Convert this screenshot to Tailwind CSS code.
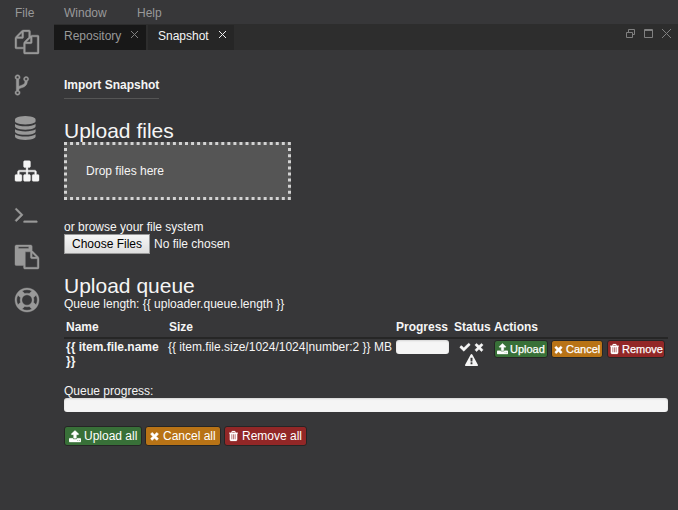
<!DOCTYPE html>
<html lang="en">
<head>
<meta charset="utf-8">
<title>Snapshot</title>
<script src="https://cdn.jsdelivr.net/npm/@tailwindcss/browser@4"></script>
</head>
<body class="w-[678px] h-[510px] overflow-hidden bg-[#373739] text-[#f5f5f5] font-['Liberation_Sans',Arial,sans-serif] text-[12px] leading-[17px]">
<svg class="hidden">
  <symbol id="check" viewBox="0 0 1792 1792"><path d="M1671 566q0 40-28 68l-724 724-136 136q-28 28-68 28t-68-28l-136-136-362-362q-28-28-28-68t28-68l136-136q28-28 68-28t68 28l294 295 656-657q28-28 68-28t68 28l136 136q28 28 28 68z"/></symbol>
  <symbol id="times" viewBox="192 0 1408 1792"><path d="M1490 1322q0 40-28 68l-136 136q-28 28-68 28t-68-28l-294-294-294 294q-28 28-68 28t-68-28l-136-136q-28-28-28-68t28-68l294-294-294-294q-28-28-28-68t28-68l136-136q28-28 68-28t68 28l294 294 294-294q28-28 68-28t68 28l136 136q28 28 28 68t-28 68l-294 294 294 294q28 28 28 68z"/></symbol>
  <symbol id="warning" viewBox="0 0 1792 1792"><path d="M1024 1375v-190q0-14-9.5-23.5t-22.5-9.5h-192q-13 0-22.5 9.5t-9.5 23.5v190q0 14 9.5 23.5t22.5 9.5h192q13 0 22.5-9.5t9.5-23.5zm-2-374l18-459q0-12-10-19-13-11-24-11h-220q-11 0-24 11-10 7-10 21l17 457q0 10 10 16.5t24 6.5h185q14 0 23.5-6.5t10.5-16.5zm-14-934l768 1408q35 63-2 126-17 29-46.5 46t-63.5 17h-1536q-34 0-63.5-17t-46.5-46q-37-63-2-126l768-1408q17-31 47-49t65-18 65 18 47 49z"/></symbol>
  <symbol id="trash" viewBox="192 0 1408 1792"><path d="M704 1376v-704q0-14-9-23t-23-9h-64q-14 0-23 9t-9 23v704q0 14 9 23t23 9h64q14 0 23-9t9-23zm256 0v-704q0-14-9-23t-23-9h-64q-14 0-23 9t-9 23v704q0 14 9 23t23 9h64q14 0 23-9t9-23zm256 0v-704q0-14-9-23t-23-9h-64q-14 0-23 9t-9 23v704q0 14 9 23t23 9h64q14 0 23-9t9-23zm-544-992h448l-48-117q-7-9-17-11h-317q-10 2-17 11zm928 32v64q0 14-9 23t-23 9h-96v948q0 83-47 143.5t-113 60.5h-832q-66 0-113-58.5t-47-141.5v-952h-96q-14 0-23-9t-9-23v-64q0-14 9-23t23-9h309l70-167q15-37 54-63t79-26h320q40 0 79 26t54 63l70 167h309q14 0 23 9t9 23z"/></symbol>
  <symbol id="upload" viewBox="64 0 1664 1792"><path d="M1344 1472q0-26-19-45t-45-19-45 19-19 45 19 45 45 19 45-19 19-45zm256 0q0-26-19-45t-45-19-45 19-19 45 19 45 45 19 45-19 19-45zm128-224v320q0 40-28 68t-68 28h-1472q-40 0-68-28t-28-68v-320q0-40 28-68t68-28h427q21 56 70.5 92t110.5 36h256q61 0 110.5-36t70.5-92h427q40 0 68 28t28 68zm-325-648q-17 40-59 40h-256v448q0 26-19 45t-45 19h-256q-26 0-45-19t-19-45v-448h-256q-42 0-59-40-17-39 14-69l448-448q18-19 45-19t45 19l448 448q31 30 14 69z"/></symbol>
</svg>

<header class="flex h-6 pl-[15px] pt-[5px] text-[#999]">
  <span class="w-[49px]">File</span><span class="w-[73px]">Window</span><span>Help</span>
</header>

<div class="flex">
  <nav class="flex flex-col gap-[19px] w-[54px] shrink-0 pl-[15px] pt-[6.4px] fill-[#999] stroke-[#999] [stroke-width:30]">
    <svg class="w-6 h-6 overflow-visible" viewBox="0 0 1792 1792"><path d="M1696 384q40 0 68 28t28 68v1216q0 40-28 68t-68 28h-960q-40 0-68-28t-28-68v-288h-544q-40 0-68-28t-28-68v-672q0-40 20-88t48-76l408-408q28-28 76-48t88-20h416q40 0 68 28t28 68v328q68-40 128-40h416zm-544 213l-299 299h299v-299zm-640-384l-299 299h299v-299zm196 647l316-316v-416h-384v416q0 40-28 68t-68 28h-416v640h512v-256q0-40 20-88t48-76zm956 804v-1152h-384v416q0 40-28 68t-68 28h-416v640h896z"/></svg>
    <svg class="w-[13.7px] h-6 overflow-visible" viewBox="384 0 1024 1792"><path d="M672 1472q0-40-28-68t-68-28-68 28-28 68 28 68 68 28 68-28 28-68zm0-1152q0-40-28-68t-68-28-68 28-28 68 28 68 68 28 68-28 28-68zm640 128q0-40-28-68t-68-28-68 28-28 68 28 68 68 28 68-28 28-68zm96 0q0 52-26 96.5t-70 69.5q-2 287-226 414-67 38-203 81-128 40-169.5 71t-41.5 100v26q44 25 70 69.5t26 96.5q0 80-56 136t-136 56-136-56-56-136q0-52 26-96.5t70-69.5v-820q-44-25-70-69.5t-26-96.5q0-80 56-136t136-56 136 56 56 136q0 52-26 96.5t-70 69.5v497q54-26 154-57 55-17 87.5-29.5t70.5-31 59-39.5 40.5-51 28-69.5 8.5-91.5q-44-25-70-69.5t-26-96.5q0-80 56-136t136-56 136 56 56 136z"/></svg>
    <svg class="w-[20.6px] h-6 stroke-none" viewBox="128 0 1536 1792"><path d="M896 768q237 0 443-43t325-127v170q0 69-103 128t-280 93.5-385 34.5-385-34.5-280-93.5-103-128v-170q119 84 325 127t443 43zm0 768q237 0 443-43t325-127v170q0 69-103 128t-280 93.5-385 34.5-385-34.5-280-93.5-103-128v-170q119 84 325 127t443 43zm0-384q237 0 443-43t325-127v170q0 69-103 128t-280 93.5-385 34.5-385-34.5-280-93.5-103-128v-170q119 84 325 127t443 43zm0-1152q208 0 385 34.5t280 93.5 103 128v128q0 69-103 128t-280 93.5-385 34.5-385-34.5-280-93.5-103-128v-128q0-69 103-128t280-93.5 385-34.5z"/></svg>
    <svg class="w-6 h-6 overflow-visible fill-[#f5f5f5] stroke-[#f5f5f5]" viewBox="0 0 1792 1792"><path d="M1792 1248v320q0 40-28 68t-68 28h-320q-40 0-68-28t-28-68v-320q0-40 28-68t68-28h96v-192h-512v192h96q40 0 68 28t28 68v320q0 40-28 68t-68 28h-320q-40 0-68-28t-28-68v-320q0-40 28-68t68-28h96v-192h-512v192h96q40 0 68 28t28 68v320q0 40-28 68t-68 28h-320q-40 0-68-28t-28-68v-320q0-40 28-68t68-28h96v-192q0-52 38-90t90-38h512v-192h-96q-40 0-68-28t-28-68v-320q0-40 28-68t68-28h320q40 0 68 28t28 68v320q0 40-28 68t-68 28h-96v192h512q52 0 90 38t38 90v192h96q40 0 68 28t28 68z"/></svg>
    <svg class="w-6 h-6 overflow-visible" viewBox="64 0 1792 1792"><path d="M649 983l-466 466q-10 10-23 10t-23-10l-50-50q-10-10-10-23t10-23l393-393-393-393q-10-10-10-23t10-23l50-50q10-10 23-10t23 10l466 466q10 10 10 23t-10 23zm1079 457v64q0 14-9 23t-23 9h-960q-14 0-23-9t-9-23v-64q0-14 9-23t23-9h960q14 0 23 9t9 23z"/></svg>
    <svg class="w-6 h-6 overflow-visible" viewBox="0 0 1792 1792"><path d="M768 1664h896v-640h-416q-40 0-68-28t-28-68v-416h-384v1152zm256-1440v-64q0-13-9.5-22.5t-22.5-9.5h-704q-13 0-22.5 9.5t-9.5 22.5v64q0 13 9.5 22.5t22.5 9.5h704q13 0 22.5-9.5t9.5-22.5zm256 672h299l-299-299v299zm512 128v672q0 40-28 68t-68 28h-960q-40 0-68-28t-28-68v-160h-544q-40 0-68-28t-28-68v-1344q0-40 28-68t68-28h1088q40 0 68 28t28 68v328q21 13 36 28l408 408q28 28 48 76t20 88z"/></svg>
    <svg class="w-6 h-6 overflow-visible" viewBox="0 0 1792 1792"><path d="M896 0q182 0 348 71t286 191 191 286 71 348-71 348-191 286-286 191-348 71-348-71-286-191-191-286-71-348 71-348 191-286 286-191 348-71zm0 128q-190 0-361 90l194 194q82-28 167-28t167 28l194-194q-171-90-361-90zm-678 1129l194-194q-28-82-28-167t28-167l-194-194q-90 171-90 361t90 361zm678 407q190 0 361-90l-194-194q-82 28-167 28t-167-28l-194 194q171 90 361 90zm0-384q159 0 271.5-112.5t112.5-271.5-112.5-271.5-271.5-112.5-271.5 112.5-112.5 271.5 112.5 271.5 271.5 112.5zm484-217l194 194q90-171 90-361t-90-361l-194 194q28 82 28 167t-28 167z"/></svg>
  </nav>

  <main class="w-[624px]">
    <div class="flex h-[26px] pt-px bg-[#2d2d2d]">
      <div class="flex w-[92px] h-[25px] bg-[#181818] pl-[10px] pt-[3px] text-[#999]">
        <span class="w-[67px]">Repository</span>
        <svg class="w-[7px] h-[7px] mt-[3px]" viewBox="0 0 7 7" stroke="#808080"><path d="M0 0L7 7M7 0L0 7"/></svg>
      </div>
      <div class="flex w-[86px] h-[25px] ml-[2px] bg-[#262626] pl-[10px] pt-[3px]">
        <span class="w-[61px]">Snapshot</span>
        <svg class="w-[7px] h-[7px] mt-[3px]" viewBox="0 0 7 7" stroke="#eee"><path d="M0 0L7 7M7 0L0 7"/></svg>
      </div>
      <div class="flex gap-[9px] ml-auto mr-[7px] pt-[4px]">
        <svg class="w-[9px] h-[9px]" viewBox="0 0 9 9" fill="none" stroke="#808080"><path d="M2.500 3V.5h6v5H6M.5 3.500h6v5h-6z"/></svg>
        <svg class="w-[9px] h-[9px]" viewBox="0 0 9 9" fill="none" stroke="#808080"><path d="M.5 .5h8v8h-8zM0 1.500h9"/></svg>
        <svg class="w-[9px] h-[9px]" viewBox="0 0 9 9" fill="none" stroke="#808080"><path d="M0 0L9 9M9 0L0 9"/></svg>
      </div>
    </div>

    <section class="pl-[10px] pr-[10px]">
      <div class="pt-[27px]"><div class="w-[95px] h-[22px] border-b border-[#555] font-bold whitespace-nowrap">Import Snapshot</div></div>

      <h2 class="mt-[20px] h-[23px] text-[21px] leading-[23px]">Upload files</h2>
      <div class="relative w-[227px] h-[58px] rounded-[3px] bg-[#555] pl-[22px] pt-[21px]">
        <svg class="absolute inset-0 w-[227px] h-[58px]" viewBox="0 0 227 58" fill="none" stroke="#d3d3d3" stroke-width="3"><path stroke-dasharray="3 3.05" d="M0 1.500H227M0 56.500H227"/><path stroke-dasharray="3 3.1" d="M1.500 6.100V55M225.500 6.100V55"/></svg>
        Drop files here
      </div>
      <div class="mt-[19px] h-[15px]">or browse your file system</div>
      <div class="flex h-[20px]">
        <button class="w-[86px] h-[20px] border border-[#999] bg-linear-to-b from-[#f6f6f6] to-[#dedede] text-black leading-[18px]">Choose Files</button>
        <span class="ml-[4px] pt-[2px]">No file chosen</span>
      </div>

      <h2 class="mt-[20px] h-[22px] text-[21px] leading-[23px]">Upload queue</h2>
      <div class="h-[21px]">Queue length: {{ uploader.queue.length }}</div>

      <div class="grid grid-cols-[103px_227px_58px_40px_176px] h-[22px] border-b-2 border-[#262626] pl-[2px] pt-[2px] w-[604px] font-bold whitespace-nowrap overflow-hidden">
        <span>Name</span><span>Size</span><span>Progress</span><span>Status</span><span>Actions</span>
      </div>
      <div class="flex w-[604px] h-[44px]">
        <div class="w-[104px] pl-[2px] pt-[1px] leading-[14px] font-bold">{{ item.file.name<br>}}</div>
        <div class="w-[228px] leading-[17px] whitespace-nowrap">{{ item.file.size/1024/1024|number:2 }} MB</div>
        <div class="w-[53px] h-[14px] mt-px rounded-[3px] bg-[#f5f5f5] shadow-[inset_0_1px_2px_#0002]"></div>
        <div class="w-[45px] pt-[2px] fill-[#f5f5f5] stroke-[#f5f5f5] [stroke-width:50]">
          <div class="flex justify-center gap-[3px]"><svg class="w-[12px] h-[12px]"><use href="#check"/></svg><svg class="w-[10px] h-[12px]"><use href="#times"/></svg></div>
          <svg class="w-[13px] h-[13px] mt-[1px] mx-auto stroke-none"><use href="#warning"/></svg>
        </div>
        <div class="flex gap-[3px] pt-[1px] whitespace-nowrap text-[11px] leading-[16px] fill-white text-white [-webkit-text-stroke:0.25px_white]">
          <button class="flex items-center w-[54px] h-[18px] rounded-[3px] border border-[#252525] bg-[#387038] pl-[2px] gap-[2px]"><svg class="w-[11px] h-[12px] stroke-white [stroke-width:50]"><use href="#upload"/></svg>Upload</button>
          <button class="flex items-center w-[52px] h-[18px] rounded-[3px] border border-[#252525] bg-[#b87316] pl-[2px] gap-[3px]"><svg class="w-[9px] h-[11px] stroke-white [stroke-width:80]"><use href="#times"/></svg>Cancel</button>
          <button class="flex items-center w-[58px] h-[18px] ml-[1px] rounded-[3px] border border-[#252525] bg-[#922727] pl-[2px] gap-[3px]"><svg class="w-[9px] h-[12px] stroke-white [stroke-width:40]"><use href="#trash"/></svg>Remove</button>
        </div>
      </div>

      <div class="h-[15px]">Queue progress:</div>
      <div class="w-[604px] h-[14px] rounded-[3px] bg-[#f5f5f5] shadow-[inset_0_1px_2px_#0002]"></div>
      <div class="flex gap-[3px] mt-[14px] whitespace-nowrap leading-[18px] fill-white text-white">
        <button class="flex items-center w-[78px] h-[20px] rounded-[3px] border border-[#252525] bg-[#387038] pl-[4px] gap-[3px]"><svg class="w-[12px] h-[13px] stroke-white [stroke-width:50]"><use href="#upload"/></svg>Upload all</button>
        <button class="flex items-center w-[76px] h-[20px] rounded-[3px] border border-[#252525] bg-[#b87316] pl-[4px] gap-[4px]"><svg class="w-[9px] h-[12px] stroke-white [stroke-width:80]"><use href="#times"/></svg>Cancel all</button>
        <button class="flex items-center w-[83px] h-[20px] rounded-[3px] border border-[#252525] bg-[#922727] pl-[4px] gap-[4px]"><svg class="w-[9px] h-[12px] stroke-white [stroke-width:40]"><use href="#trash"/></svg>Remove all</button>
      </div>
    </section>
  </main>
</div>
</body>
</html>
